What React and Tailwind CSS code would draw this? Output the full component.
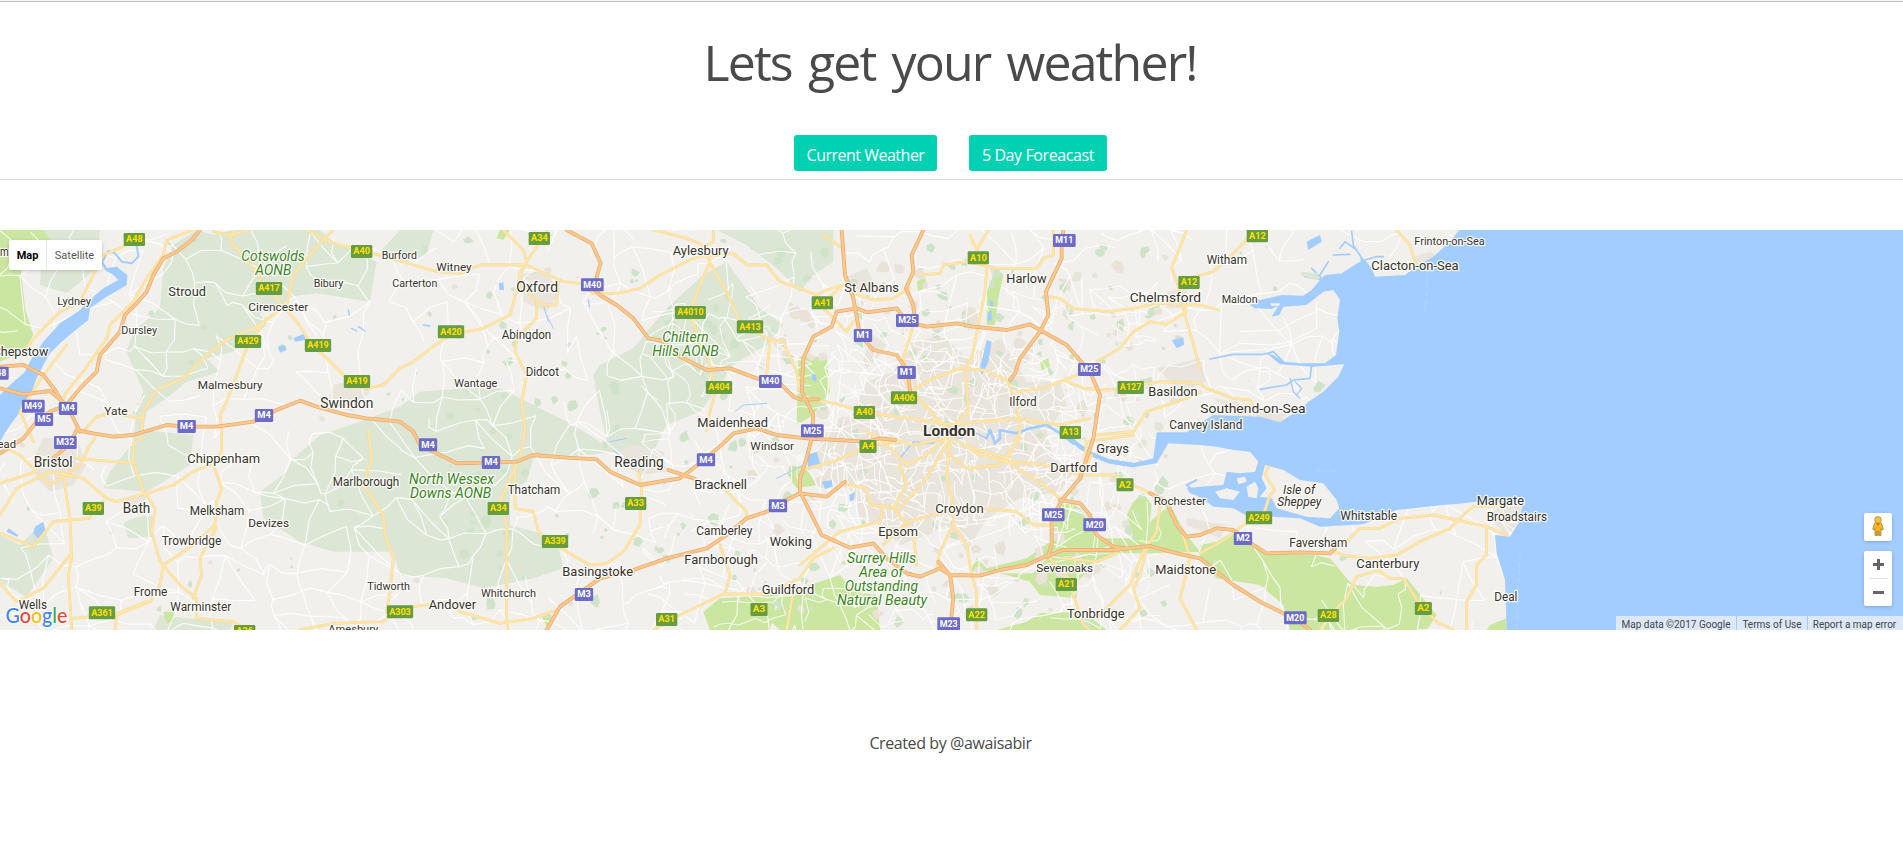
import React from "react";

// Map geometry uses a 5709 x 1200 space: three units for each CSS pixel.

function makeRandom(seed) {
  let s = seed;
  return () => {
    s = (s + 0x6d2b79f5) | 0;
    let t = Math.imul(s ^ (s >>> 15), 1 | s);
    t = (t + Math.imul(t ^ (t >>> 7), 61 | t)) ^ t;
    return ((t ^ (t >>> 14)) >>> 0) / 4294967296;
  };
}

// Web of minor lanes: a jittered lattice with some of its edges missing.
function lanes(x0, y0, x1, y1, cell, keep, seed) {
  const r = makeRandom(seed);
  const cols = Math.ceil((x1 - x0) / cell) + 1;
  const rows = Math.ceil((y1 - y0) / cell) + 1;
  const pts = [];
  for (let j = 0; j < rows; j++) {
    for (let i = 0; i < cols; i++) {
      pts.push([x0 + i * cell + (r() - 0.5) * cell * 0.9, y0 + j * cell + (r() - 0.5) * cell * 0.9]);
    }
  }
  let d = "";
  const link = (a, b) => {
    if (r() > keep) return;
    const mx = (a[0] + b[0]) / 2 + (r() - 0.5) * cell * 0.35;
    const my = (a[1] + b[1]) / 2 + (r() - 0.5) * cell * 0.35;
    d += `M${a[0].toFixed(0)} ${a[1].toFixed(0)}L${mx.toFixed(0)} ${my.toFixed(0)} ${b[0].toFixed(0)} ${b[1].toFixed(0)}`;
  };
  for (let j = 0; j < rows; j++) {
    for (let i = 0; i < cols; i++) {
      const p = pts[j * cols + i];
      if (i + 1 < cols) link(p, pts[j * cols + i + 1]);
      if (j + 1 < rows) link(p, pts[(j + 1) * cols + i]);
      if (i + 1 < cols && j + 1 < rows && r() < 0.25) link(p, pts[(j + 1) * cols + i + 1]);
    }
  }
  return d;
}

function patches(x0, y0, x1, y1, count, size, seed) {
  const r = makeRandom(seed);
  let d = "";
  for (let k = 0; k < count; k++) {
    const cx = x0 + r() * (x1 - x0);
    const cy = y0 + r() * (y1 - y0);
    const s = size * (0.35 + r() * 0.8);
    const n = 5 + Math.floor(r() * 3);
    for (let i = 0; i < n; i++) {
      const a = (i / n) * Math.PI * 2;
      const m = s * (0.5 + r() * 0.6);
      d += `${i ? "L" : "M"}${(cx + Math.cos(a) * m).toFixed(0)} ${(cy + Math.sin(a) * m).toFixed(0)}`;
    }
    d += "Z";
  }
  return d;
}

const AONB = [
  "590 15 640 30 700 15 960 15 1000 50 1130 110 1110 230 950 205 870 215 850 240 780 265 800 300 700 380 620 400 660 440 560 470 500 520 440 560 430 615 580 630 570 720 490 770 440 800 310 790 330 740 400 650 410 560 430 500 380 380 400 320 480 250 490 130 520 60",
  "370 895 400 880 455 870 460 935 385 940",
  "960 630 1080 590 1200 545 1260 500 1400 490 1500 490 1600 540 1640 560 1720 600 1850 680 1760 690 1600 700 1580 770 1530 800 1530 900 1670 940 1690 1030 1600 1060 1450 1090 1340 1060 1200 1050 1180 980 1000 980 900 950 790 880 780 800 860 740 880 700",
  "1780 450 1800 420 1900 370 2000 250 2110 150 2180 110 2280 250 2350 300 2300 360 2200 420 2160 480 2100 560 2000 600 1950 700 1830 680 1800 560",
  "2150 15 2500 15 2500 110 2440 150 2400 200 2330 130 2240 60",
  "0 930 60 960 130 890 160 1000 80 1115 0 1070",
  "130 15 300 15 290 130 200 205 120 180",
  "480 1170 560 1180 700 1190 690 1215 460 1215",
  "1200 15 1300 15 1280 90 1220 110 1140 80",
];

const PARKS = [
  "0 15 130 15 160 60 60 110 75 250 100 330 70 380 0 410",
  "2160 1120 2300 1110 2400 1090 2520 1050 2560 1100 2630 1110 2640 1215 2340 1215 2300 1180 2340 1140",
  "2160 1120 2330 1125 2310 1215 2130 1215 2110 1160",
  "2910 1040 2930 1000 2960 1030 3080 1000 3150 950 3175 840 3220 835 3270 880 3290 940 3400 940 3380 870 3400 830 3430 805 3455 840 3450 890 3510 840 3560 930 3600 980 3450 985 3300 985 3140 1000 3000 1035",
  "3000 1045 3100 1045 3140 1000 3350 985 3310 1000 3230 1070 3230 1120 3120 1110 3090 1070",
  "2990 1215 3080 1190 3120 1165 3250 1160 3320 1215",
  "3600 960 3650 950 3700 920 3760 960 3790 985 3940 990 3990 1000 4040 1060 4060 1080 4130 1085 4180 1080 4220 1060 4310 1170 4280 1215 3870 1215 3850 1140 3780 1080 3650 1060 3600 1000",
  "2960 300 2960 200 2990 130 3010 150 2995 220 2985 300",
  "2395 395 2480 395 2490 500 2440 570 2390 600",
  "2370 720 2420 730 2450 780 2390 790 2360 750",
  "2668 730 2700 690 2740 705 2730 740 2690 765",
  "2750 170 2775 155 2780 185 2755 200",
  "2820 340 2850 340 2845 365 2815 360",
  "3120 410 3145 400 3150 425 3125 435",
  "3450 250 3480 240 3470 270",
  "1625 1175 1655 1170 1645 1215",
  "490 1160 525 1160 520 1190 500 1195",
  "2790 505 2815 500 2815 530",
  "1500 15 1530 15 1510 45 1490 40",
  "4470 1200 4520 1180 4520 1215 4460 1215",
];

const URBAN = [
  "2560 560 2600 470 2680 440 2730 350 2830 330 2900 400 3000 340 3040 400 3080 470 3180 470 3200 540 3140 620 3160 700 3220 740 3180 800 3060 820 2960 880 2900 980 2840 900 2780 930 2700 960 2640 900 2580 880 2560 800 2480 760 2440 700 2480 620",
  "2600 440 2660 360 2620 330 2590 400",
  "100 700 130 640 230 640 260 720 220 780 150 800 110 760",
  "1560 150 1640 130 1680 200 1640 260 1570 230",
  "1840 690 1900 660 1990 680 2000 740 1920 750",
  "3470 430 3600 400 3620 470 3540 500",
  "3640 520 3760 540 3860 570 3840 592 3700 570",
  "3560 880 3680 900 3660 940 3560 900",
  "4490 850 4570 840 4550 900 4520 930 4470 880",
  "4240 95 4290 80 4320 95 4240 130",
  "1000 480 1080 460 1110 500 1060 560 980 540",
  "2530 160 2600 130 2620 170 2560 210",
  "3500 200 3560 190 3560 250 3500 250",
  "370 820 440 810 420 870 370 860",
];

const SEA =
  "M4378 15L4350 50 4300 95 4240 130 4215 150 4125 155 4115 130 4095 105 4080 95 4083 108 4060 122 4025 145 3975 150 3960 165 3935 195 3910 212 3845 210 3780 225 3755 215 3770 232 3750 240 3765 250 3815 252 3835 243 3815 275 3838 270 3850 245 3920 240 3970 200 4000 195 4020 225 4012 280 4018 320 4008 390 3975 415 3900 415 3850 410 3820 390 3800 385 3840 418 3940 425 4032 418 4015 455 3970 500 3925 530 3910 545 3840 592 3780 575 3640 570 3600 595 3560 622 3470 622 3460 700 3400 715 3330 702 3330 715 3400 727 3470 715 3505 655 3600 660 3650 665 3700 675 3750 680 3775 710 3765 740 3720 745 3680 740 3670 780 3600 785 3560 790 3570 805 3600 815 3640 845 3700 850 3740 872 3820 875 3900 880 3960 905 4090 898 4190 855 4300 843 4390 835 4430 830 4570 835 4555 895 4530 935 4485 930 4490 985 4515 1065 4520 1215 5709 1215 5709 15Z";

const WATER_BODIES = [
  "315 130 350 125 382 150 380 180 320 215 270 250 265 285 215 325 180 355 150 385 130 420 110 460 95 500 60 560 20 615 0 650 0 510 30 480 75 440 95 400 130 350 180 295 240 255 280 215 310 190 355 165 340 150 315 135",
  "105 905 130 890 138 925 115 942 100 925",
  "25 910 55 930 50 935 20 920",
  "2420 690 2450 680 2460 715 2425 735",
  "2465 770 2495 765 2498 785 2475 792",
  "2548 810 2565 800 2562 825 2550 830",
  "2960 345 2975 350 2965 410 2945 450 2940 430",
  "3515 345 3550 338 3552 360 3530 370",
  "3920 50 3960 30 3965 50 3925 75",
  "835 365 855 360 860 375 840 383",
  "880 340 915 325 915 345 885 350",
  "1497 175 1510 172 1512 195 1498 195",
  "2435 445 2448 450 2450 470 2437 465",
  "2965 260 2975 255 2975 285 2962 290",
  "2970 225 2980 230 2978 245 2968 242",
];

const WATER_LINES = [
  ["M310 105L325 78 345 85 365 110 395 115 415 95 410 60", 6],
  ["M305 110L320 135 350 130", 7],
  ["M3200 615L3210 640 3240 665 3280 690 3330 710 3400 720", 13],
  ["M2960 640L2970 615 2980 640 2985 655 3000 640 3000 615 3050 625 3090 610 3140 600 3180 625 3220 655", 8],
  ["M2700 700L2740 650 2800 655 2820 630 2880 640 2920 620 2960 640", 4],
  ["M3630 402L3700 388 3790 388 3820 380 3855 415", 5],
  ["M3780 493L3860 480 3880 465 3930 460 3935 420", 5],
  ["M3870 460L3880 500 3900 520M3885 470L3905 490 3890 510", 4],
  ["M4095 115L4060 60 4055 20M4070 75L4035 50 4020 70M4050 88L4000 90", 5],
  ["M3965 160L3935 130M3960 150L3985 110M3970 165L3915 155", 5],
  ["M4095 105L4130 95 4150 95", 5],
  ["M3600 815L3560 780 3590 765", 6],
  ["M1990 780L2010 760M1830 650L1880 640M2410 720L2330 760M1840 675L1870 700", 3],
  ["M1630 240L1645 290M1640 270L1660 310M2205 560L2230 540 2300 535", 3],
  ["M1045 255L1048 270M1055 310L1070 318M1075 305L1095 318M1360 315L1380 320M1270 300L1290 303M1765 225L1768 245", 4],
];

const ISLANDS = [
  "3795 720 3850 735 3900 765 3970 775 4010 825 4018 850 3990 880 3920 875 3830 850 3815 820 3780 815 3800 790 3785 760",
  "3645 800 3680 790 3720 800 3700 825 3660 820",
  "3740 785 3765 770 3775 790 3770 820 3745 815",
  "3650 750 3665 755 3660 770 3645 768",
  "3810 235 3840 235 3838 242 3815 243",
  "3710 760 3735 755 3740 770 3715 778",
];

const A_ROADS = [
  "700 15 690 50 730 90 790 170 820 200 845 240 890 290 930 350 1000 420 1060 480 1100 490 1150 480 1200 430",
  "1000 15 960 55 880 150 860 240",
  "920 15 1000 55 1100 80 1200 108 1310 140 1380 145 1440 120 1570 120",
  "640 20 690 30 750 15",
  "845 250 780 300 680 345 620 390 550 460 470 495 430 560 425 640 400 655 400 710 435 810",
  "800 280 740 370 710 450 680 530 660 570 665 615 665 680 640 715",
  "580 15 500 45 490 90 440 160 400 230 330 300 320 340 250 440 200 500 180 540",
  "270 170 240 230 180 260 120 320 60 390",
  "270 170 310 90 380 60 410 50",
  "100 650 60 560 130 450 200 360",
  "425 580 340 565 290 575 250 620",
  "640 715 580 740 520 780 440 805 350 830 320 820",
  "440 810 465 850 455 920 480 1010 540 1080 590 1120 590 1180 700 1190 740 1215",
  "640 720 665 790 650 830 645 900 580 960 490 1020 480 1080 450 1130 350 1170 345 1215",
  "650 905 600 1000 605 1050 580 1120",
  "0 870 50 790 150 740 250 760 320 820",
  "190 740 200 820 210 880 215 1000 205 1050 215 1215",
  "210 885 270 880 275 850 310 830",
  "0 1075 50 1130 130 1090 210 990",
  "110 740 0 775",
  "0 925 100 965 160 890 210 885",
  "110 740 60 690 0 660",
  "120 750 150 780 240 720 270 660 285 640",
  "230 700 400 715",
  "215 1180 340 1170 440 1130",
  "1105 615 1115 700 1090 780 1150 870 1155 930 1180 1000 1170 1100 1160 1160",
  "900 1215 1000 1195 1150 1190 1200 1150 1350 1130 1380 1160 1500 1195 1600 1180 1670 1155",
  "1510 15 1570 75 1580 110 1560 150 1565 190 1630 240 1670 240 1675 170",
  "1580 120 1690 170 1740 175 1780 205 1850 205 1920 190 1980 150 2080 100 2120 90",
  "1640 20 1600 80 1560 140 1555 180 1530 270 1450 310 1350 330 1300 365 1240 410 1200 430",
  "1610 230 1610 280 1550 340 1545 380 1580 450 1565 530 1575 615 1560 700 1530 760 1500 830 1520 900 1520 1000 1520 1180 1525 1215",
  "1545 720 1545 850 1600 860 1615 920 1700 980 1770 1020 1820 1015 1870 980 1920 900 1925 790 1915 740",
  "1960 15 2060 40 2110 60 2130 110 2100 180 2080 230 2075 280 2100 350 2125 400 2130 430 2150 490 2130 560 2120 615",
  "2110 65 2140 50 2140 15",
  "2120 95 2200 85 2240 120 2300 120 2340 170 2400 190 2450 210 2480 195 2530 180",
  "2130 115 2180 200 2220 290 2300 340 2350 350 2390 440 2400 500",
  "2310 345 2300 450",
  "2170 790 2240 860 2240 880",
  "2160 960 2190 1050 2175 1105 2020 1180 1960 1215",
  "2175 1107 2300 1107 2400 1060 2440 1000 2500 970",
  "2380 1100 2360 1215",
  "2470 30 2520 65",
  "2530 180 2460 240 2500 280 2540 320 2560 290",
  "2560 205 2620 225 2680 220 2730 190",
  "2910 30 2930 75 2965 15",
  "2930 75 2960 130 2955 200 2935 300 2915 400 2895 430 2905 560 2860 600",
  "2760 150 2820 145 2830 120 2900 110 2990 130 3110 130 3130 100 3160 90 3160 15",
  "3150 215 3180 220 3220 250 3320 260 3400 250 3470 235 3600 240 3655 255",
  "3290 410 3360 370 3400 320 3450 290 3500 298 3560 260 3550 225 3515 130 3560 15",
  "3750 35 3700 85 3640 140 3550 165",
  "3050 500 3130 490 3190 465 3250 490 3330 495 3480 470 3600 475 3620 490 3700 520 3750 525 3770 560",
  "3550 250 3600 430",
  "3180 470 3280 430",
  "3290 630 3400 620 3440 560 3560 520 3600 500",
  "2730 500 2800 460 2880 430 2950 435 3020 465 3050 530 3060 620 3020 710",
  "2400 520 2480 530 2560 550 2650 570 2730 580 2860 600",
  "2740 300 2710 400 2720 480 2800 570 2850 620",
  "2860 600 2940 590 3050 580 3180 600 3270 580",
  "2685 645 2740 660 2830 640 2900 620",
  "2850 630 2780 690 2720 720 2640 640 2600 620",
  "2400 735 2500 710 2620 660 2700 650",
  "2530 775 2600 790 2610 840 2700 850 2780 760 2850 640",
  "2850 640 2840 750 2860 850 2860 900 2820 980 2810 1030",
  "2860 900 2900 960 2915 1050 2930 1100 2930 1215",
  "2400 1020 2520 920 2640 890 2650 840",
  "2650 960 2720 890 2800 870 2900 850",
  "2860 640 2940 690 3020 710 3130 780 3180 820",
  "3020 710 3140 720 3240 750 3340 750 3450 805",
  "2850 690 2900 730 3000 720 3060 640",
  "2700 720 2720 780 2680 850 2740 920 2750 1020",
  "2890 660 3020 700",
  "2950 850 3050 860 3100 900 3150 900",
  "3150 1000 3200 1050 3250 1200 3270 1215",
  "3430 980 3390 1080 3290 1180",
  "3190 1000 3290 1010 3350 985",
  "3440 970 3420 1050 3400 1090 3420 1150 3360 1215",
  "3480 840 3470 920 3440 965",
  "3540 900 3570 1000 3540 1120 3590 1215",
  "3275 690 3250 740 3260 650 3400 630",
  "3600 985 3680 940 3730 900 3790 870 3810 810 3825 795 3795 750 3805 725",
  "4000 980 4040 993 4110 1000 4190 990 4260 950 4350 910 4400 860 4420 845 4500 842",
  "4040 950 4080 910 4140 910 4200 880 4300 870 4370 885 4460 905 4520 930",
  "4460 910 4460 990 4430 1020 4430 1080 4400 1130 4400 1215",
  "4140 1035 4070 1055 4040 1120 3980 1180 3960 1215",
  "4140 1040 4170 1060 4210 1060 4260 1140 4310 1190 4360 1215",
  "4190 15 4230 60 4250 130",
];

const MOTORWAYS = [
  "600 15 575 45 530 80 490 100 460 150 440 200 410 235 375 270 360 320 300 390 290 440 240 490 200 540 150 560 110 590 70 640 0 685",
  "0 490 70 508 150 498 200 540 240 620",
  "0 425 70 420 130 450 165 495 180 520",
  "160 700 210 655 230 615 280 625 340 635 400 630 500 600 560 605 650 605 760 590 830 555 900 527 950 545 1040 570 1100 580 1200 590 1240 620 1260 660 1370 715 1480 712 1550 710 1600 690 1700 698 1790 703 1830 740 1920 780 1990 768 2040 760 2100 715 2170 655 2200 625 2270 610 2330 630 2420 640 2600 650 2640 640 2685 645",
  "2005 735 2045 748 2085 762",
  "1700 15 1775 55 1802 115 1780 190 1800 210 1850 240 1900 280 1945 340 1990 348 2040 395 2120 435 2190 430 2270 460 2340 475 2380 515 2400 523 2455 523",
  "2570 250 2510 260 2495 305 2440 335 2410 400 2405 500 2440 570 2435 640 2420 700 2400 760 2400 800 2450 900 2465 930 2550 968 2620 955 2660 1000 2720 1045 2760 1055 2820 1030 2850 1050 2940 1052 3000 1035 3080 1020 3145 990 3155 960 3155 880 3190 820 3240 760 3280 640 3300 510 3270 440 3200 360 3120 315 3090 298 3020 315 2920 305 2870 295 2780 305 2720 290 2690 250 2600 262 2570 250",
  "2770 15 2735 90 2740 140 2718 190 2740 240 2745 290",
  "2525 15 2535 150 2560 220 2580 330 2620 375 2690 390 2725 440 2730 500",
  "3190 15 3185 60 3185 100 3138 200 3145 270 3120 320 3060 400 3045 445 3030 465",
  "2815 1010 2850 1050 2860 1120 2850 1215",
  "1640 1215 1680 1145 1800 1060 1900 1035 2000 1000 2120 970 2180 930 2240 880 2300 860 2360 825 2400 805 2480 815 2535 770",
  "3180 825 3240 835 3270 870 3290 930 3340 965 3380 970",
  "3140 995 3190 975 3340 975 3450 963 3530 985 3600 1000 3700 1080 3780 1130 3850 1165 3900 1190 3930 1215",
  "3450 805 3500 830 3530 900 3560 935 3600 930 3650 910 3700 915 3760 960 3800 985 3900 982 3990 985 4005 970",
];

// [text, left, baseline, right, font size]
const TOWNS = [
  ["m", 0, 93, 26, 37], ["Lydney", 172, 241, 273, 34], ["Stroud", 505, 213, 618, 40],
  ["Bibury", 941, 186, 1030, 34], ["Cirencester", 745, 259, 925, 35], ["Dursley", 364, 327, 471, 34],
  ["Chepstow", -22, 394, 145, 36], ["Malmesbury", 593, 493, 788, 35], ["Yate", 313, 571, 383, 35],
  ["Swindon", 961, 549, 1120, 42], ["Burford", 1145, 102, 1251, 34], ["Carterton", 1177, 186, 1312, 34],
  ["Portishead", -115, 670, 48, 35], ["Bristol", 101, 727, 218, 42], ["Chippenham", 562, 715, 780, 38],
  ["Bath", 368, 865, 451, 42], ["Melksham", 569, 870, 733, 36], ["Devizes", 745, 906, 867, 35],
  ["Trowbridge", 485, 961, 664, 36], ["Marlborough", 998, 783, 1198, 36], ["Frome", 401, 1113, 502, 36],
  ["Warminster", 511, 1158, 694, 36], ["Wells", 56, 1152, 141, 36], ["Tidworth", 1102, 1095, 1230, 33],
  ["Amesbury", 985, 1225, 1135, 35], ["Witney", 1309, 138, 1415, 35], ["Oxford", 1549, 201, 1674, 42],
  ["Aylesbury", 2018, 90, 2186, 39], ["Abingdon", 1505, 343, 1654, 37], ["Didcot", 1577, 454, 1677, 37],
  ["Wantage", 1363, 486, 1492, 34], ["Maidenhead", 2092, 605, 2304, 39], ["Windsor", 2251, 675, 2382, 35],
  ["Reading", 1843, 727, 1991, 42], ["Bracknell", 2083, 792, 2241, 39], ["Thatcham", 1523, 808, 1681, 36],
  ["Camberley", 2089, 930, 2257, 36], ["Woking", 2309, 964, 2436, 39], ["Farnborough", 2053, 1018, 2274, 39],
  ["Basingstoke", 1687, 1053, 1899, 39], ["Whitchurch", 1443, 1116, 1608, 34], ["Andover", 1286, 1152, 1428, 39],
  ["Guildford", 2285, 1107, 2443, 39], ["St Albans", 2533, 200, 2697, 39], ["Harlow", 3019, 174, 3140, 39],
  ["Chelmsford", 3389, 231, 3603, 41], ["Basildon", 3445, 513, 3593, 39], ["Ilford", 3028, 544, 3110, 38],
  ["Canvey Island", 3508, 612, 3727, 36], ["Grays", 3289, 684, 3387, 38], ["Dartford", 3151, 741, 3292, 39],
  ["Croydon", 2806, 864, 2951, 39], ["Epsom", 2635, 934, 2754, 39], ["Sevenoaks", 3109, 1041, 3279, 35],
  ["Rochester", 3461, 841, 3618, 35], ["Maidstone", 3466, 1047, 3648, 39], ["Tonbridge", 3201, 1179, 3374, 39],
  ["Witham", 3620, 118, 3741, 36], ["Maldon", 3665, 234, 3773, 35], ["Frinton-on-Sea", 4243, 59, 4454, 34],
  ["Clacton-on-Sea", 4114, 135, 4376, 39], ["Southend-on-Sea", 3601, 564, 3917, 40],
  ["Whitstable", 4021, 885, 4191, 36], ["Faversham", 3868, 967, 4042, 37], ["Canterbury", 4069, 1030, 4258, 39],
  ["Margate", 4430, 839, 4572, 39], ["Broadstairs", 4460, 888, 4641, 36], ["Deal", 4483, 1129, 4552, 36],
];

const AREAS = [
  ["Cotswolds", 724, 108, 914], ["AONB", 766, 150, 874], ["Chiltern", 1987, 351, 2126],
  ["Hills AONB", 1957, 393, 2156], ["North Wessex", 1227, 778, 1482], ["Downs AONB", 1230, 819, 1474],
  ["Surrey Hills", 2541, 1014, 2748], ["Area of", 2577, 1056, 2710], ["Outstanding", 2534, 1098, 2754],
  ["Natural Beauty", 2511, 1141, 2781],
];

// [text, centre x, centre y]
const SHIELDS = [
  ["A48", 403, 43], ["A40", 1085, 79], ["A417", 807, 190], ["A429", 744, 349], ["A419", 954, 361],
  ["A419", 1071, 469], ["M48", -8, 444], ["M49", 100, 543], ["M4", 204, 550], ["M5", 132, 583],
  ["M4", 560, 604], ["M4", 792, 571], ["M32", 196, 652], ["A39", 280, 850], ["A361", 306, 1163],
  ["A36", 734, 1219], ["A303", 1200, 1160], ["A34", 1618, 40], ["M40", 1777, 179], ["A420", 1353, 320],
  ["A4010", 2071, 262], ["A413", 2250, 305], ["A404", 2157, 487], ["M40", 2311, 469], ["M4", 1284, 659],
  ["M4", 1473, 712], ["A34", 1495, 850], ["A339", 1665, 949], ["A33", 1907, 835], ["M4", 2118, 704],
  ["M3", 2334, 842], ["M3", 1752, 1108], ["A31", 2000, 1183], ["A3", 2277, 1153], ["A41", 2467, 233],
  ["A10", 2935, 98], ["M11", 3193, 46], ["A12", 3567, 172], ["M25", 2722, 286], ["M1", 2589, 331],
  ["M1", 2720, 442], ["A406", 2712, 518], ["A40", 2593, 562], ["M25", 2437, 617], ["A4", 2604, 664],
  ["M25", 3268, 433], ["A127", 3392, 487], ["A13", 3211, 622], ["A2", 3375, 779], ["M25", 3160, 869],
  ["M20", 3284, 899], ["A21", 3199, 1078], ["A22", 2930, 1169], ["M23", 2846, 1196], ["A12", 3772, 32],
  ["A249", 3777, 878], ["M2", 3729, 940], ["M20", 3886, 1178], ["A28", 3985, 1171], ["A2", 4270, 1150],
];

const SHIELD_WIDTH = { 2: 51, 3: 64, 4: 79, 5: 93 };
const toPath = (points) => "M" + points;
const toShape = (points) => "M" + points + "Z";

const COUNTRY_LANES = lanes(0, 15, 4560, 1215, 84, 0.55, 11);
const SUBURB_LANES = lanes(1950, 200, 3420, 1150, 58, 0.42, 23);
const CITY_STREETS = lanes(2490, 370, 3190, 900, 36, 0.58, 37);
const WOODS = patches(1350, 30, 3550, 1200, 200, 19, 5) + patches(0, 30, 4400, 1200, 80, 12, 9);
const VILLAGES = patches(2250, 60, 3500, 1200, 120, 24, 14) + patches(0, 60, 4400, 1200, 45, 12, 31);

function Label({ text, x, y, right, size, className }) {
  return (
    <text
      x={x}
      y={y}
      fontSize={size}
      textLength={right - x}
      lengthAdjust="spacingAndGlyphs"
      stroke="#fff"
      strokeOpacity="0.85"
      strokeWidth="8"
      strokeLinejoin="round"
      paintOrder="stroke"
      className={className}
    >
      {text}
    </text>
  );
}

function Shield({ text, x, y }) {
  const motorway = text[0] === "M";
  const w = SHIELD_WIDTH[text.length] + (motorway ? 4 : 0);
  return (
    <g>
      <rect x={x - w / 2} y={y - 19} width={w} height="39" rx="4" fill={motorway ? "#6c6cc8" : "#679c40"} />
      <text
        x={x}
        y={y + 9}
        textAnchor="middle"
        fontSize="26"
        fontWeight="700"
        textLength={w - 14}
        lengthAdjust="spacingAndGlyphs"
        fill={motorway ? "#ffffff" : "#ffe100"}
      >
        {text}
      </text>
    </g>
  );
}

function MapCanvas() {
  return (
    <svg
      viewBox="0 15 5709 1200"
      className="block h-[400px] w-[1903px] font-['Roboto',sans-serif]"
      role="img"
      aria-label="Map of southern England"
    >
      <rect x="0" y="15" width="5709" height="1200" fill="#f2f0ed" />
      <path d={AONB.map(toShape).join("")} fill="#dce6d5" />
      <path d={PARKS.map(toShape).join("")} fill="#cae6a1" />
      <path d={URBAN.map(toShape).join("")} fill="#e9e4dc" />
      <path d={VILLAGES} fill="#e8e2d9" />
      <path d={WOODS} fill="#cfe3c8" />
      <g fill="none" stroke="#fff" strokeLinejoin="round">
        <path d={COUNTRY_LANES} strokeWidth="3.4" strokeOpacity="0.85" />
        <path d={SUBURB_LANES} strokeWidth="3.2" strokeOpacity="0.8" />
        <path d={CITY_STREETS} strokeWidth="3.4" strokeOpacity="0.85" />
      </g>
      <path d={SEA} fill="#a3ccff" />
      <path d={WATER_BODIES.map(toShape).join("")} fill="#a3ccff" />
      <path d={ISLANDS.map(toShape).join("")} fill="#f2f0ed" />
      <g fill="none" stroke="#a3ccff" strokeLinejoin="round" strokeLinecap="round">
        {WATER_LINES.map(([d, w]) => (
          <path key={d} d={d} strokeWidth={w} />
        ))}
      </g>
      <path d="M3900 140L3955 145 3955 165 3930 160 3905 152Z" fill="#dce6d5" />
      <path d="M3940 490L3955 467 3977 480 3960 502 3945 502Z" fill="#cfe3c8" />
      <g fill="none" stroke="#fff" strokeWidth="3" strokeOpacity="0.9">
        <path d="M3950 230V310L3870 350 3820 360 3720 355 3670 380M3950 260L3880 290 3840 315 3720 320" />
        <path d="M3780 440H3810L3810 465 3770 490" />
      </g>
      <g fill="none" stroke="#bcd9fc" strokeWidth="2" strokeDasharray="14 9">
        <path d="M4283 130L4280 200 4276 260" />
        <path d="M4560 990L4550 1215" />
        <path d="M3950 738H4015" />
      </g>
      <g fill="none" strokeLinejoin="round" strokeLinecap="round">
        <path d={A_ROADS.map(toPath).join("")} stroke="#f5d995" strokeWidth="8.5" />
        <path d={A_ROADS.map(toPath).join("")} stroke="#ffe5a8" strokeWidth="6" />
        <path d={MOTORWAYS.map(toPath).join("")} stroke="#e6ab6f" strokeWidth="11.5" />
        <path d={MOTORWAYS.map(toPath).join("")} stroke="#fdc88b" strokeWidth="7" />
      </g>
      <g fill="#38332b">
        {TOWNS.map(([text, x, y, right, size]) => (
          <Label key={text} text={text} x={x} y={y} right={right} size={size} />
        ))}
        <Label text="London" x={2769} y={633} right={2926} size={46} className="font-bold" />
        <Label text="Isle of" x={3849} y={808} right={3945} size={36} className="italic" />
        <Label text="Sheppey" x={3832} y={843} right={3964} size={36} className="italic" />
      </g>
      <g fill="#3c851d" className="italic">
        {AREAS.map(([text, x, y, right]) => (
          <Label key={text} text={text} x={x} y={y} right={right} size={42} />
        ))}
      </g>
      {SHIELDS.map(([text, x, y]) => (
        <Shield key={`${text}-${x}-${y}`} text={text} x={x} y={y} />
      ))}
    </svg>
  );
}

function GoogleLogo() {
  return (
    <svg
      viewBox="0 0 66 26"
      className="absolute bottom-0 left-[4px] h-[26px] w-[66px] font-['Lato',sans-serif] font-medium"
    >
      <text
        x="1.5"
        y="18.5"
        fontSize="21"
        textLength="62"
        lengthAdjust="spacingAndGlyphs"
        stroke="#fff"
        strokeWidth="2"
        strokeLinejoin="round"
        paintOrder="stroke"
      >
        <tspan fill="#4285f4">G</tspan>
        <tspan fill="#ea4335">o</tspan>
        <tspan fill="#fbbc05">o</tspan>
        <tspan fill="#4285f4">g</tspan>
        <tspan fill="#34a853">l</tspan>
        <tspan fill="#ea4335">e</tspan>
      </text>
    </svg>
  );
}

function Pegman() {
  return (
    <svg viewBox="0 0 12 20" className="h-[20px] w-[12px]">
      <path
        d="M2.6 7.2h6.8l1.9 6-1.5.9-.8-1.4V19.5H6.6V15h-1.2v4.5H3V12.700l-.8 1.400-1.500-.9z"
        fill="#fbb917"
        stroke="#96835a"
        strokeWidth=".8"
      />
      <circle cx="6" cy="3.900" r="3.300" fill="#fdc02f" stroke="#a08d62" strokeWidth=".8" />
      <path d="M4 7.300h4L6 10z" fill="#e8711c" />
      <path d="M6.700 15h1.800v4.200H6.700zM3.400 15h1.600v4.200H3.400z" fill="#d99710" />
    </svg>
  );
}

function MapPanel() {
  return (
    <section className="relative mt-[50px] h-[400px] overflow-hidden bg-[#a3ccff] font-['Roboto',sans-serif]">
      <MapCanvas />
      <div className="absolute top-[10px] left-[9px] flex h-[30px] rounded-[2px] bg-white text-[11px] leading-[31px] shadow-[0_1px_4px_-1px_rgba(0,0,0,0.3)]">
        <button className="w-[38px] border-r border-[#e6e6e6] text-center font-bold text-black">Map</button>
        <button className="w-[55px] text-center text-[#565656]">Satellite</button>
      </div>
      <GoogleLogo />
      <div className="absolute right-[11px] bottom-[24px] flex w-[28px] flex-col gap-[10px]">
        <button className="flex h-[28px] items-center justify-center rounded-[2px] bg-white pb-[2px] shadow-[0_1px_4px_-1px_rgba(0,0,0,0.3)]">
          <Pegman />
        </button>
        <div className="flex h-[55px] flex-col items-center rounded-[2px] bg-white shadow-[0_1px_4px_-1px_rgba(0,0,0,0.3)]">
          <button className="flex h-[27px] w-full items-center justify-center">
            <svg viewBox="0 0 11 11" className="h-[11px] w-[11px]">
              <path d="M5.500 0v11M0 5.500h11" stroke="#666" strokeWidth="3" />
            </svg>
          </button>
          <div className="h-px w-[19px] bg-[#e6e6e6]" />
          <button className="flex h-[27px] w-full items-center justify-center">
            <svg viewBox="0 0 11 3" className="h-[3px] w-[11px]">
              <path d="M0 1.500h11" stroke="#666" strokeWidth="3" />
            </svg>
          </button>
        </div>
      </div>
      <div className="absolute right-0 bottom-0 flex h-[14px] gap-px text-[10px] leading-[17px] text-[#444] *:overflow-hidden *:bg-[#dde9f9] *:text-center *:whitespace-nowrap">
        <span className="w-[120px]">Map data ©2017 Google</span>
        <span className="w-[70px]">Terms of Use</span>
        <span className="w-[95px] pr-[2px]">Report a map error</span>
      </div>
    </section>
  );
}

export default function App() {
  return (
    <div className="min-h-[864px] w-full overflow-hidden bg-white font-['Open_Sans','Noto_Sans',sans-serif] text-[#4a4a4a]">
      <div className="h-[2px] border-b border-[#bfbfbf] bg-[#f4f4f4]" />
      <header className="flex h-[178px] flex-col items-center border-b border-[#dbdbdb]">
        <h1 className="mt-[25px] h-[108px] pr-[3px] text-[50px] leading-[70px] whitespace-nowrap tracking-[-1.85px] [word-spacing:5px]">
          Lets get your weather!
        </h1>
        <div className="flex gap-[32px] pr-[2px]">
          <button className="h-[36px] w-[143px] rounded-[3px] bg-[#00d1b2] pt-[3px] text-[16px] tracking-[-0.5px] whitespace-nowrap text-white">
            Current Weather
          </button>
          <button className="h-[36px] w-[138px] rounded-[3px] bg-[#00d1b2] pt-[3px] text-[16px] tracking-[-0.4px] whitespace-nowrap text-white">
            5 Day Foreacast
          </button>
        </div>
      </header>
      <MapPanel />
      <footer className="flex justify-center pt-[101px] pr-[2px] text-[16px] leading-[24px] tracking-[-0.4px]">
        Created by @awaisabir
      </footer>
    </div>
  );
}
